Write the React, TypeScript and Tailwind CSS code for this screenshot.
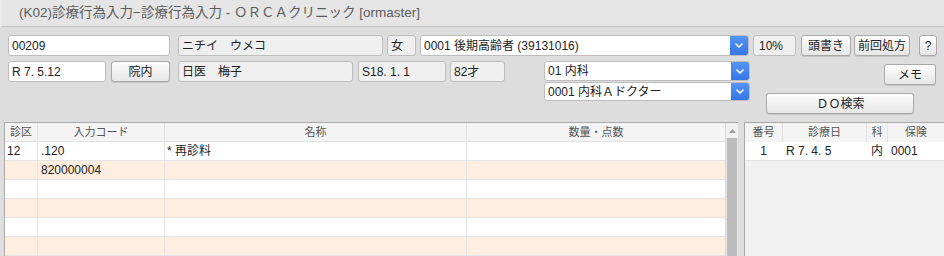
import { ReactNode } from "react";

const font = "font-['Liberation_Sans','Noto_Sans_CJK_JP',sans-serif]";

const Chevron = () => (
  <svg width="8" height="5" viewBox="0 0 8 5" fill="none">
    <path d="M1 1l3 3 3-3" stroke="white" strokeWidth="1.6" strokeLinecap="round" strokeLinejoin="round" />
  </svg>
);

const Field = ({ w, ro, children, extra = "" }: { w: string; ro?: boolean; children: ReactNode; extra?: string }) => (
  <div
    className={`${w} ${extra} h-[21px] shrink-0 flex items-center px-[3px] border border-[#bdbdbd] rounded-[3px] text-[12px] text-[#222] whitespace-nowrap overflow-hidden ${
      ro ? "bg-[#efefef]" : "bg-white"
    }`}
  >
    {children}
  </div>
);

const Select = ({ w, h, children, extra = "" }: { w: string; h: string; children: ReactNode; extra?: string }) => (
  <div className={`${w} ${h} ${extra} shrink-0 flex border border-[#bdbdbd] rounded-[3px] bg-white overflow-hidden`}>
    <div className="flex-1 flex items-center px-[3px] text-[12px] text-[#222] whitespace-nowrap">{children}</div>
    <div className="w-[18px] flex items-center justify-center bg-linear-to-b from-[#5593f5] to-[#3576e6]">
      <Chevron />
    </div>
  </div>
);

const Btn = ({ w, children, extra = "" }: { w: string; children: ReactNode; extra?: string }) => (
  <button
    className={`${w} ${extra} h-[21px] shrink-0 flex items-center justify-center border border-[#a9a9a9] rounded-[3px] bg-linear-to-b from-[#fdfdfd] to-[#e6e6e6] shadow-[0_1px_0_#c4c4c4] text-[12px] text-[#222] whitespace-nowrap`}
  >
    {children}
  </button>
);

const rows = [
  { ku: "12", code: ".120", name: "* 再診料" },
  { ku: "", code: "820000004", name: "" },
  { ku: "", code: "", name: "" },
  { ku: "", code: "", name: "" },
  { ku: "", code: "", name: "" },
  { ku: "", code: "", name: "" },
];

export default function App() {
  return (
    <div className={`${font} w-[944px] h-[256px] overflow-hidden bg-[#dddddd] flex flex-col`}>
      <div className="h-[27px] shrink-0 border-b border-l-2 border-b-[#c3c3c3] border-l-[#ececec] bg-[#e5e5e5] pl-[17px] flex items-center text-[13.5px] text-[#5c5c5c] whitespace-nowrap">
        (K02)診療行為入力−診療行為入力 - ＯＲＣＡクリニック [ormaster]
      </div>

      <div className="h-[95px] shrink-0 px-[8px] pt-[8px] flex flex-col gap-[5px]">
        <div className="flex">
          <Field w="w-[162px]">00209</Field>
          <Field w="w-[205px]" extra="ml-[8px]" ro>ニチイ　ウメコ</Field>
          <Field w="w-[29px]" extra="ml-[4px]" ro>女</Field>
          <Select w="w-[329px]" h="h-[21px]" extra="ml-[4px]">0001 後期高齢者 (39131016)</Select>
          <Field w="w-[43px]" extra="ml-[4px] pl-[5px]" ro>10%</Field>
          <Btn w="w-[50px]" extra="ml-[5px]">頭書き</Btn>
          <Btn w="w-[56px]" extra="ml-[3px]">前回処方</Btn>
          <Btn w="w-[18px]" extra="ml-[9px]">?</Btn>
        </div>

        <div className="flex items-start">
          <Field w="w-[98px]">R 7. 5.12</Field>
          <Btn w="w-[59px]" extra="ml-[5px]">院内</Btn>
          <Field w="w-[175px]" extra="ml-[8px]" ro>日医　梅子</Field>
          <Field w="w-[88px]" extra="ml-[5px]" ro>S18. 1. 1</Field>
          <Field w="w-[55px]" extra="ml-[4px]" ro>82才</Field>
          <div className="ml-[39px] w-[207px] flex flex-col gap-[1px]">
            <Select w="w-full" h="h-[20px]">01 内科</Select>
            <Select w="w-full" h="h-[19px]">0001 内科Ａドクター</Select>
          </div>
          <div className="ml-[16px] w-[170px] flex flex-col">
            <Btn w="w-[52px]" extra="mt-[3px] self-end">メモ</Btn>
            <Btn w="w-[148px]" extra="mt-[8px]">ＤＯ検索</Btn>
          </div>
        </div>
      </div>

      <div className="flex-1 min-h-0 flex pl-[4px] gap-[6px]">
        <div className="flex border-l border-t border-[#a9a9a9] bg-white">
          <div className="flex flex-col">
            <div className="h-[19px] flex border-b border-[#e2e2e2] bg-[#f4f4f4] text-[11px] text-[#555]">
              <div className="w-[33px] border-r border-[#e2e2e2] flex items-center justify-center">診区</div>
              <div className="w-[127px] border-r border-[#e2e2e2] flex items-center justify-center">入力コード</div>
              <div className="w-[302px] border-r border-[#e2e2e2] flex items-center justify-center">名称</div>
              <div className="w-[258px] flex items-center justify-center">数量・点数</div>
            </div>
            {rows.map((r, i) => (
              <div
                key={i}
                className={`h-[19px] flex border-b border-[#e4e4e4] text-[12px] text-[#222] ${
                  i % 2 === 1 ? "bg-[#fdeee0]" : "bg-white"
                }`}
              >
                <div className="w-[33px] border-r border-[#e4e4e4] flex items-center px-[2px]">{r.ku}</div>
                <div className="w-[127px] border-r border-[#e4e4e4] flex items-center px-[3px]">{r.code}</div>
                <div className="w-[302px] border-r border-[#e4e4e4] flex items-center px-[2px]">{r.name}</div>
                <div className="w-[258px]"></div>
              </div>
            ))}
          </div>
          <div className="w-[13px] flex flex-col bg-[#e8e8e8] border-l border-[#d6d6d6]">
            <div className="h-[15px] bg-[#f1f1f1] flex items-center justify-center">
              <svg width="7" height="4" viewBox="0 0 7 4">
                <path d="M0 4L3.5 0 7 4z" fill="#a0a0a0" />
              </svg>
            </div>
            <div className="flex-1 mx-[1px] bg-[#bcbcbc]"></div>
          </div>
        </div>

        <div className="flex-1 flex flex-col border-l border-t border-[#a9a9a9] bg-[#f0f0f0]">
          <div className="h-[19px] flex bg-[#f4f4f4] text-[11px] text-[#555]">
            <div className="w-[38px] border-r border-[#e2e2e2] flex items-center justify-center">番号</div>
            <div className="w-[84px] border-r border-[#e2e2e2] flex items-center justify-center">診療日</div>
            <div className="w-[21px] border-r border-[#e2e2e2] flex items-center justify-center">科</div>
            <div className="flex-1 flex items-center justify-center">保険</div>
          </div>
          <div className="h-[19px] flex bg-white border-b border-[#e2e2e2] text-[12px] text-[#222]">
            <div className="w-[38px] border-r border-white flex items-center justify-center">1</div>
            <div className="w-[84px] border-r border-white flex items-center px-[3px]">R 7. 4. 5</div>
            <div className="w-[21px] border-r border-white flex items-center justify-center">内</div>
            <div className="flex-1 flex items-center px-[3px]">0001</div>
          </div>
        </div>
      </div>
    </div>
  );
}
